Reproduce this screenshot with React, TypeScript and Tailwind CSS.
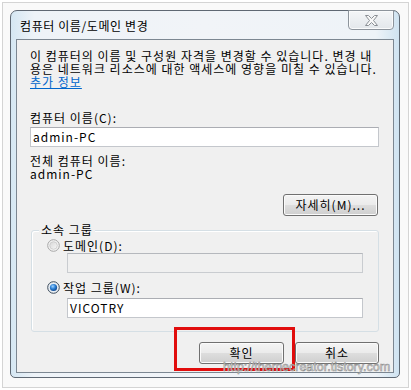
import React from "react";

const KR = { fontFamily: '"Noto Sans CJK KR", "Noto Sans", sans-serif' };

function RadioOff() {
  return (
    <svg width="13" height="13" viewBox="0 0 13 13">
      <defs>
        <linearGradient id="ro" x1="0" y1="0" x2="1" y2="1">
          <stop offset="0" stopColor="#d6d6d6" />
          <stop offset="1" stopColor="#f8f8f8" />
        </linearGradient>
      </defs>
      <circle cx="6.5" cy="6.5" r="5.8" fill="#f4f4f4" stroke="#a6a6a6" strokeWidth="1" />
      <circle cx="6.5" cy="6.5" r="3.8" fill="url(#ro)" stroke="#c8c8c8" strokeWidth="0.8" />
    </svg>
  );
}

function RadioOn() {
  return (
    <svg width="13" height="13" viewBox="0 0 13 13">
      <defs>
        <radialGradient id="rn" cx="0.4" cy="0.35" r="0.7">
          <stop offset="0" stopColor="#9fd3ff" />
          <stop offset="0.5" stopColor="#2a7fd4" />
          <stop offset="1" stopColor="#0c3f86" />
        </radialGradient>
      </defs>
      <circle cx="6.5" cy="6.5" r="5.8" fill="#e9eef3" stroke="#3d4c5c" strokeWidth="1" />
      <circle cx="6.5" cy="6.5" r="3.6" fill="url(#rn)" />
    </svg>
  );
}

function WinButton({ label, w }: { label: string; w: string }) {
  return (
    <div
      className={`${w} h-[22px] flex items-center justify-center rounded-[3px] border border-[#707070] bg-[linear-gradient(#f4f4f4,#ebebeb_48%,#dddddd_52%,#cfcfcf)] shadow-[inset_0_0_0_1px_#fbfbfb] text-[12px] tracking-[1px] text-black leading-none`}
      style={KR}
    >
      {label}
    </div>
  );
}

export default function App() {
  return (
    <div className="relative w-[411px] h-[390px] bg-white p-[2px]">
      <div className="h-[386px] border border-[#d4d4d4] bg-[#f9f9f9] pl-[7px] pt-[7px]">
        {/* window */}
        <div className="relative w-[390px] h-[368px] rounded-t-[7px] rounded-b-[5px] border border-[#5f6873] bg-[linear-gradient(90deg,#d5e7f3,#eef3f8_6%,#f1f4f8_50%,#eef3f8_94%,#cfe3f1)] flex flex-col">
          {/* title bar */}
          <div className="h-[28px] flex items-start">
            <div className="pl-[9px] pt-[8px] text-[12px] leading-[13px] tracking-[0.6px] text-black flex-1" style={KR}>
              컴퓨터 이름/도메인 변경
            </div>
            <div className="mr-[5px] -mt-px w-[46px] h-[20px] rounded-b-[4px] border border-[#8d949c] bg-[linear-gradient(#f4f6f8,#e3e7eb)] shadow-[inset_0_0_0_1px_#fafbfc] flex items-center justify-center">
              <svg width="15" height="11" viewBox="0 0 15 11">
                <path
                  d="M1.5 0.5 L4.5 0.5 L7.5 3.5 L10.5 0.5 L13.5 0.5 L9.5 5.5 L13.5 10.5 L10.5 10.5 L7.5 7.5 L4.5 10.5 L1.5 10.5 L5.5 5.5 Z"
                  fill="#f8f8f8"
                  stroke="#8a8f95"
                  strokeWidth="1"
                  strokeLinejoin="round"
                />
              </svg>
            </div>
          </div>
          {/* panel */}
          <div className="mx-[5px] mb-[4px] flex-1 border border-[#7c8792] bg-[#f0f0f0] pl-[13px] pr-[14px] pt-[9px] flex flex-col text-[12px] tracking-[1px] text-black" style={KR}>
            <div className="leading-[13px] whitespace-nowrap">
              <div>이 컴퓨터의 이름 및 구성원 자격을 변경할 수 있습니다. 변경 내</div>
              <div>용은 네트워크 리소스에 대한 액세스에 영향을 미칠 수 있습니다.</div>
              <div className="text-[#0066cc] underline">추가 정보</div>
            </div>
            <div className="mt-[23px] leading-[13px]">컴퓨터 이름(C):</div>
            <div className="mt-[3px] h-[20px] border border-[#c4c7cc] border-t-[#abadb3] bg-white pl-[2px] flex items-center leading-none">
              admin-PC
            </div>
            <div className="mt-[7px] leading-[13px]">전체 컴퓨터 이름:</div>
            <div className="leading-[13px]">admin-PC</div>
            <div className="mt-[14px] flex justify-end mr-[1px]">
              <WinButton label="자세히(M)..." w="w-[95px]" />
            </div>
            {/* group box */}
            <div className="relative mt-[14px] ml-[1px] h-[102px] rounded-[3px] border border-[#d5dfe5] shadow-[inset_1px_1px_0_#ffffff] pl-[15px] pr-[15px] pt-[8px] flex flex-col">
              <div className="absolute left-[7px] top-[-8px] px-[2px] bg-[#f0f0f0] leading-[13px]">소속 그룹</div>
              <div className="flex items-center gap-[3px] leading-[13px]">
                <RadioOff />
                <span>도메인(D):</span>
              </div>
              <div className="mt-[1px] ml-[20px] h-[20px] border border-[#c9ccd0] border-t-[#b5b8bd] bg-[#f0f0f0]" />
              <div className="mt-[8px] flex items-center gap-[3px] leading-[13px]">
                <RadioOn />
                <span>작업 그룹(W):</span>
              </div>
              <div className="mt-[4px] ml-[20px] h-[20px] border border-[#c4c7cc] border-t-[#abadb3] bg-white pl-[2px] flex items-center leading-none">
                VICOTRY
              </div>
            </div>
            <div className="mt-[10px] flex justify-end gap-[11px]">
              <WinButton label="확인" w="w-[85px]" />
              <WinButton label="취소" w="w-[84px]" />
            </div>
          </div>
        </div>
      </div>
      {/* annotation overlays */}
      <div className="absolute left-[174px] top-[327px] w-[121px] h-[44px] border-[3px] border-[#e10d0d]" />
      <div
        className="absolute left-[223px] top-[361px] text-[12.5px] leading-none whitespace-nowrap text-[rgba(255,255,255,0.75)] [-webkit-text-stroke:0.6px_#8c8c8c]"
        style={{ fontFamily: '"Liberation Sans", Arial, sans-serif' }}
      >
        http://themecreator.tistory.com
      </div>
    </div>
  );
}
